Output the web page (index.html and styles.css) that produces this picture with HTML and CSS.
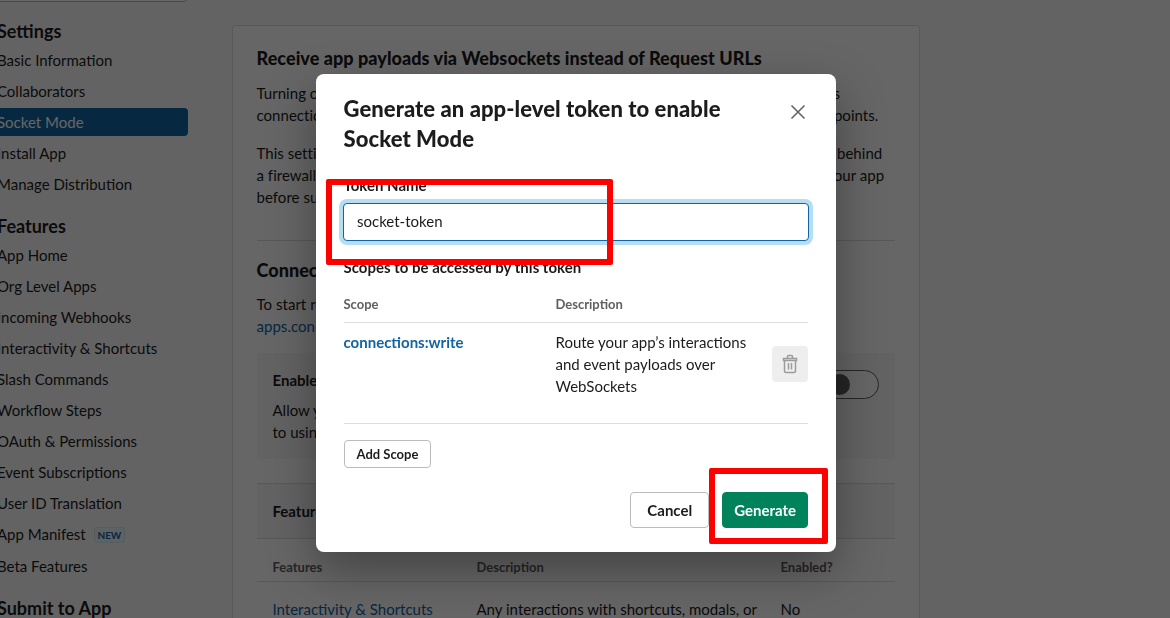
FILE: index.html
```html
<html>
	<head>
		<title>Socket Mode</title>
		<link rel="stylesheet" href="styles.css">
	</head>
	<body>
		<div class="page">
			<div class="sidebar">
				<div class="appPicker"></div>
				<div class="navHeading">Settings</div>
				<a class="navLink">Basic Information</a>
				<a class="navLink">Collaborators</a>
				<a class="navLink active">Socket Mode</a>
				<a class="navLink">Install App</a>
				<a class="navLink">Manage Distribution</a>
				<div class="navHeading spaced">Features</div>
				<a class="navLink">App Home</a>
				<a class="navLink">Org Level Apps</a>
				<a class="navLink">Incoming Webhooks</a>
				<a class="navLink">Interactivity &amp; Shortcuts</a>
				<a class="navLink">Slash Commands</a>
				<a class="navLink">Workflow Steps</a>
				<a class="navLink">OAuth &amp; Permissions</a>
				<a class="navLink">Event Subscriptions</a>
				<a class="navLink">User ID Translation</a>
				<a class="navLink manifest">App Manifest <span class="newBadge">NEW</span></a>
				<a class="navLink">Beta Features</a>
				<div class="navHeading spaced">Submit to App</div>
			</div>

			<div class="card">
				<h2 class="cardTitle">Receive app payloads via Websockets instead of Request URLs</h2>
				<p class="copy first">Turning on Socket Mode will route the app’s interactions and all events over WebSockets<br>connections, instead of sending all these payloads to your app’s public Request URL endpoints.</p>
				<p class="copy">This setting is helpful for apps on a local network or for apps that might need to be kept behind<br>a firewall. Your app will need to maintain a connection, so make sure to check whether your app<br>before submitting it to the App Directory.</p>
				<div class="divider"></div>
				<h2 class="cardTitle second">Connect using Socket Mode</h2>
				<p class="copy short">To start receiving events, you’ll need to create an app-level token with<br><span class="link">apps.connections.open</span></p>

				<div class="enableBox">
					<div class="enableText">
						<div class="strong">Enable Socket Mode</div>
						<p class="enableCopy">Allow your app to receive payloads over WebSockets<br>to using Request URLs</p>
					</div>
					<div class="toggle"><div class="knob"></div></div>
				</div>

				<div class="featuresRow strong">Features affected by Socket Mode</div>
				<div class="featuresHead">
					<div class="colName">Features</div>
					<div class="colDesc">Description</div>
					<div>Enabled?</div>
				</div>
				<div class="featuresBody">
					<div class="colName link">Interactivity &amp; Shortcuts</div>
					<div class="colDesc">Any interactions with shortcuts, modals, or</div>
					<div>No</div>
				</div>
			</div>
		</div>

		<div class="overlay"></div>

		<div class="modal">
			<div class="modalHeader">
				<h1 class="modalTitle">Generate an app-level token to enable<br>Socket Mode</h1>
				<svg class="closeIcon" width="16" height="16" viewBox="0 0 16 16">
					<path d="M1.5 1.5L14.5 14.5M14.5 1.5L1.5 14.5" stroke="#616061" stroke-width="1.5" fill="none"/>
				</svg>
			</div>
			<label class="fieldLabel" for="TokenName">Token Name</label>
			<input class="tokenInput" type="text" id="TokenName" value="socket-token">
			<div class="fieldLabel scopesLabel">Scopes to be accessed by this token</div>
			<div class="scopeHead">
				<div class="scopeCol">Scope</div>
				<div>Description</div>
			</div>
			<div class="scopeRow">
				<div class="scopeCol scopeName">connections:write</div>
				<div class="scopeDesc">Route your app’s interactions<br>and event payloads over<br>WebSockets</div>
				<div class="trashBtn">
					<svg width="16" height="20" viewBox="0 0 16 20">
						<path d="M1.5 4.5H14.5V6.5H1.5ZM5.5 4.5V2.5Q5.5 1.5 6.5 1.5H9.5Q10.5 1.5 10.5 2.5V4.5M2.5 6.5V17Q2.5 18.5 4 18.5H12Q13.5 18.5 13.5 17V6.5M6.5 9V15.5M9.5 9V15.5" stroke="#9c9c9c" stroke-width="1.5" fill="none"/>
					</svg>
				</div>
			</div>
			<button class="btn small">Add Scope</button>
			<div class="modalFooter">
				<button class="btn">Cancel</button>
				<button class="btn primary">Generate</button>
			</div>
		</div>

		<!-- red annotation boxes from the screenshot -->
		<div class="marker markerInput"></div>
		<div class="marker markerGenerate"></div>
	</body>
</html>
```

FILE: styles.css
```css
body{
	margin:0px;
	height:618px;
	overflow:hidden;
	background-color:#f8f8f8;
	font-family:"Lato","Liberation Sans",sans-serif;
	font-size:15px;
	line-height:22px;
	color:#1d1c1d;
}
.page{
	display:flex;
	align-items:flex-start;
	height:618px;
	overflow:hidden;
}

/* sidebar */
.sidebar{
	flex:none;
	width:203px;
	margin-left:-15px;
}
.appPicker{
	height:32px;
	margin-top:-30px;
	margin-bottom:17px;
	border:1px solid #bbb;
	border-radius:4px;
	box-sizing:border-box;
	background:#fff;
}
.navHeading{
	font-size:18px;
	font-weight:700;
	line-height:24px;
	padding-left:12px;
	margin-bottom:3px;
}
.navHeading.spaced{
	margin-top:16px;
}
.navLink{
	display:block;
	height:28px;
	line-height:28px;
	padding-left:12px;
	margin-bottom:3px;
	border-radius:4px;
	white-space:nowrap;
}
.navLink.active{
	background:#1264a3;
	color:#fff;
}
.navLink.manifest{
	margin-bottom:4px;
}
.newBadge{
	display:inline-block;
	height:14px;
	line-height:14px;
	padding:0 3px;
	margin-left:4px;
	font-size:10px;
	font-weight:700;
	letter-spacing:-.1px;
	color:#1264a3;
	background:#e8f5fa;
	border:1px solid #d4e8f2;
	border-radius:3px;
	vertical-align:1px;
}

/* main card */
.card{
	flex:none;
	width:688px;
	height:640px;
	box-sizing:border-box;
	margin-top:25px;
	margin-left:44px;
	padding:20px 24px 0 23.5px;
	background:#fff;
	border:1px solid #ddd;
	border-radius:4px;
}
.cardTitle{
	margin:0;
	font-size:18px;
	font-weight:900;
	letter-spacing:.05px;
	line-height:24px;
	white-space:nowrap;
}
.cardTitle.second{
	margin-top:17px;
}
.copy{
	margin:16px 0 0;
	letter-spacing:.03px;
	white-space:nowrap;
}
.copy.first{
	margin-top:12px;
}
.copy.short{
	margin-top:11px;
}
.link{
	color:#1264a3;
}
.divider{
	height:1px;
	margin-top:32px;
	background:#ddd;
}
.strong{
	font-weight:700;
}
.enableBox{
	display:flex;
	justify-content:space-between;
	margin-top:16px;
	padding:16px;
	background:#f8f8f8;
}
.enableCopy{
	margin:8px 0 0;
}
.toggle{
	position:relative;
	width:60px;
	height:29px;
	box-sizing:border-box;
	margin-top:1px;
	border:1px solid #616061;
	border-radius:15px;
	background:#fff;
}
.knob{
	width:21px;
	height:21px;
	margin:3px 0 0 9px;
	border-radius:50%;
	background:#5c5c5c;
}
.featuresRow{
	height:54px;
	line-height:54px;
	padding-left:16px;
	margin-top:24px;
	background:#f8f8f8;
	border-top:1px solid #ddd;
	border-bottom:1px solid #ddd;
}
.featuresHead,.featuresBody{
	display:flex;
	padding-left:16px;
}
.featuresHead{
	height:42px;
	line-height:56px;
	font-size:13px;
	font-weight:700;
	color:#616061;
	border-bottom:1px solid #ddd;
}
.featuresBody{
	padding-top:16px;
}
.colName{
	width:204px;
}
.colDesc{
	width:304px;
	white-space:nowrap;
}

.overlay{
	position:fixed;
	top:0;
	left:0;
	right:0;
	bottom:0;
	background:rgba(0,0,0,.6);
}

/* modal */
.modal{
	position:absolute;
	top:74px;
	left:316px;
	width:520px;
	height:478px;
	box-sizing:border-box;
	padding:20px 28px 24px 27.5px;
	background:#fff;
	border-radius:8px;
	box-shadow:0 18px 48px rgba(0,0,0,.35);
}
.modalHeader{
	display:flex;
	justify-content:space-between;
}
.modalTitle{
	margin:0;
	font-size:22px;
	font-weight:900;
	letter-spacing:.07px;
	line-height:30px;
	color:#1d1c1d;
}
.closeIcon{
	margin-top:10px;
	margin-right:2px;
}
.fieldLabel{
	display:block;
	margin-top:20px;
	font-weight:700;
}
.scopesLabel{
	margin-top:15px;
}
.tokenInput{
	display:block;
	width:466px;
	height:38px;
	box-sizing:border-box;
	margin:7px 0 0 -.5px;
	padding:0 13px 2px;
	font-family:inherit;
	font-size:15px;
	color:#1d1c1d;
	border:1px solid #1264a3;
	border-radius:4px;
	outline:none;
	box-shadow:0 0 0 4px #b4dff2;
}
.scopeHead{
	display:flex;
	padding-top:16px;
	padding-bottom:8px;
	line-height:20px;
	font-size:13px;
	font-weight:700;
	color:#616061;
	border-bottom:1px solid #ddd;
}
.scopeCol{
	flex:none;
	width:212px;
}
.scopeRow{
	display:flex;
	height:101px;
	box-sizing:border-box;
	padding-top:8px;
	border-bottom:1px solid #ddd;
}
.scopeName{
	font-weight:700;
	color:#1264a3;
}
.scopeDesc{
	flex:1;
}
.trashBtn{
	display:flex;
	align-items:center;
	justify-content:center;
	width:36px;
	height:36px;
	margin-top:15px;
	background:#eee;
	border-radius:4px;
}
.btn{
	height:36px;
	padding:0 16px;
	font-family:inherit;
	font-size:15px;
	font-weight:700;
	color:#1d1c1d;
	background:#fff;
	border:1px solid #bbb;
	border-radius:4px;
}
.btn.small{
	display:block;
	height:28px;
	margin-top:16px;
	padding:0 12px;
	font-size:13px;
}
.btn.primary{
	color:#fff;
	background:#00835a;
	border-color:#00835a;
	padding:0 11px;
}
.modalFooter{
	display:flex;
	justify-content:flex-end;
	gap:13px;
	margin-top:24px;
}

/* annotations */
.marker{
	position:absolute;
	box-sizing:border-box;
	border:6px solid #f00;
	border-radius:2px;
}
.markerInput{
	top:179px;
	left:326px;
	width:287px;
	height:86px;
}
.markerGenerate{
	top:468px;
	left:709px;
	width:119px;
	height:76px;
}
```
